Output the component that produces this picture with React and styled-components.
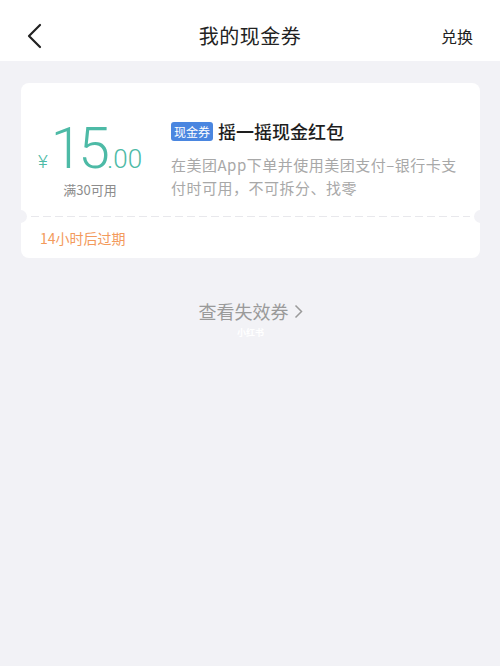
import React from "react";
import styled, { createGlobalStyle } from "styled-components";

const Global = createGlobalStyle`
  html, body { margin: 0; padding: 0; background: #f2f2f6; }
  body { font-family: "Noto Sans CJK SC", "Noto Sans", sans-serif; }
  * { box-sizing: border-box; }
`;

const Page = styled.div`
  width: 500px;
  min-height: 666px;
  background: #f2f2f6;
`;

const Header = styled.div`
  height: 61px;
  background: #fff;
  display: grid;
  grid-template-columns: 80px 1fr 80px;
  align-items: center;
  padding-top: 10px;
`;

const Back = styled.div`
  padding-left: 26px;
  display: flex;
  align-items: center;
`;

const Title = styled.div`
  text-align: center;
  font-size: 20px;
  color: #222;
  letter-spacing: 0.5px;
`;

const Action = styled.div`
  text-align: right;
  padding-right: 27px;
  font-size: 16px;
  color: #222;
`;

const Content = styled.div`
  padding: 22px 20px 0 21px;
`;

const Card = styled.div`
  position: relative;
  background: #fff;
  border-radius: 8px;
  overflow: hidden;
`;

const Main = styled.div`
  height: 133px;
  display: flex;
  align-items: flex-start;
  padding-top: 35px;
`;

const Left = styled.div`
  width: 138px;
  display: flex;
  flex-direction: column;
  align-items: center;
  padding-top: 8px;
`;

const Amount = styled.div`
  height: 46px;
  display: flex;
  align-items: baseline;
  color: #4dbaa6;
  font-family: Roboto, "Liberation Sans", sans-serif;
  font-weight: 300;
  line-height: 46px;
`;

const Yen = styled.span`
  font-size: 19px;
  margin-right: 3px;
`;

const Big = styled.span`
  font-size: 57px;
  letter-spacing: -4px;
`;

const Small = styled.span`
  font-size: 26px;
  margin-left: 1px;
`;

const Cond = styled.div`
  margin-top: 8px;
  font-size: 13px;
  line-height: 19px;
  color: #8c8c8c;
`;

const Right = styled.div`
  flex: 1;
  margin-left: 12px;
  padding-right: 20px;
`;

const NameRow = styled.div`
  display: flex;
  align-items: center;
  gap: 5px;
`;

const Tag = styled.span`
  background: #4a86e0;
  color: #fff;
  font-size: 12px;
  border-radius: 3px;
  padding: 0 3px;
  height: 19px;
  line-height: 19px;
`;

const Name = styled.span`
  font-size: 18px;
  font-weight: 500;
  color: #1e1e1e;
`;

const Desc = styled.div`
  margin-top: 9px;
  font-size: 15px;
  line-height: 23px;
  letter-spacing: 0.5px;
  color: #a8a8a8;
`;

const Divider = styled.div`
  position: relative;
  height: 1px;
  margin: 0 10px;
  background: repeating-linear-gradient(90deg, #e8e8ec 0 8px, transparent 8px 12px);
`;

const Notch = styled.span`
  position: absolute;
  top: -6px;
  ${(p) => (p.$side === "left" ? "left: -17px;" : "right: -17px;")}
  width: 13px;
  height: 13px;
  border-radius: 50%;
  background: #f2f2f6;
`;

const Footer = styled.div`
  height: 41px;
  display: flex;
  align-items: center;
  padding-left: 19px;
  font-size: 14px;
  color: #f39a5c;
`;

const More = styled.div`
  margin-top: 40px;
  display: flex;
  flex-direction: column;
  align-items: center;
`;

const MoreText = styled.div`
  display: flex;
  align-items: center;
  gap: 5px;
  font-size: 18px;
  color: #9a9a9a;
`;

const Mark = styled.div`
  font-size: 9px;
  color: #fff;
  font-weight: 700;
  margin-top: 2px;
`;

export default function App() {
  return (
    <Page>
      <Global />
      <Header>
        <Back>
          <svg width="16" height="26" viewBox="0 0 16 26">
            <path d="M14 2 L3 13 L14 24" fill="none" stroke="#222" strokeWidth="2.2" strokeLinecap="round" strokeLinejoin="round" />
          </svg>
        </Back>
        <Title>我的现金券</Title>
        <Action>兑换</Action>
      </Header>
      <Content>
        <Card>
          <Main>
            <Left>
              <Amount>
                <Yen>¥</Yen>
                <Big>15</Big>
                <Small>.00</Small>
              </Amount>
              <Cond>满30可用</Cond>
            </Left>
            <Right>
              <NameRow>
                <Tag>现金券</Tag>
                <Name>摇一摇现金红包</Name>
              </NameRow>
              <Desc>在美团App下单并使用美团支付–银行卡支付时可用，不可拆分、找零</Desc>
            </Right>
          </Main>
          <Divider>
            <Notch $side="left" />
            <Notch $side="right" />
          </Divider>
          <Footer>14小时后过期</Footer>
        </Card>
        <More>
          <MoreText>
            查看失效券
            <svg width="9" height="15" viewBox="0 0 9 15">
              <path d="M1.5 1.5 L7.5 7.5 L1.5 13.5" fill="none" stroke="#9a9a9a" strokeWidth="1.5" />
            </svg>
          </MoreText>
          <Mark>小红书</Mark>
        </More>
      </Content>
    </Page>
  );
}
